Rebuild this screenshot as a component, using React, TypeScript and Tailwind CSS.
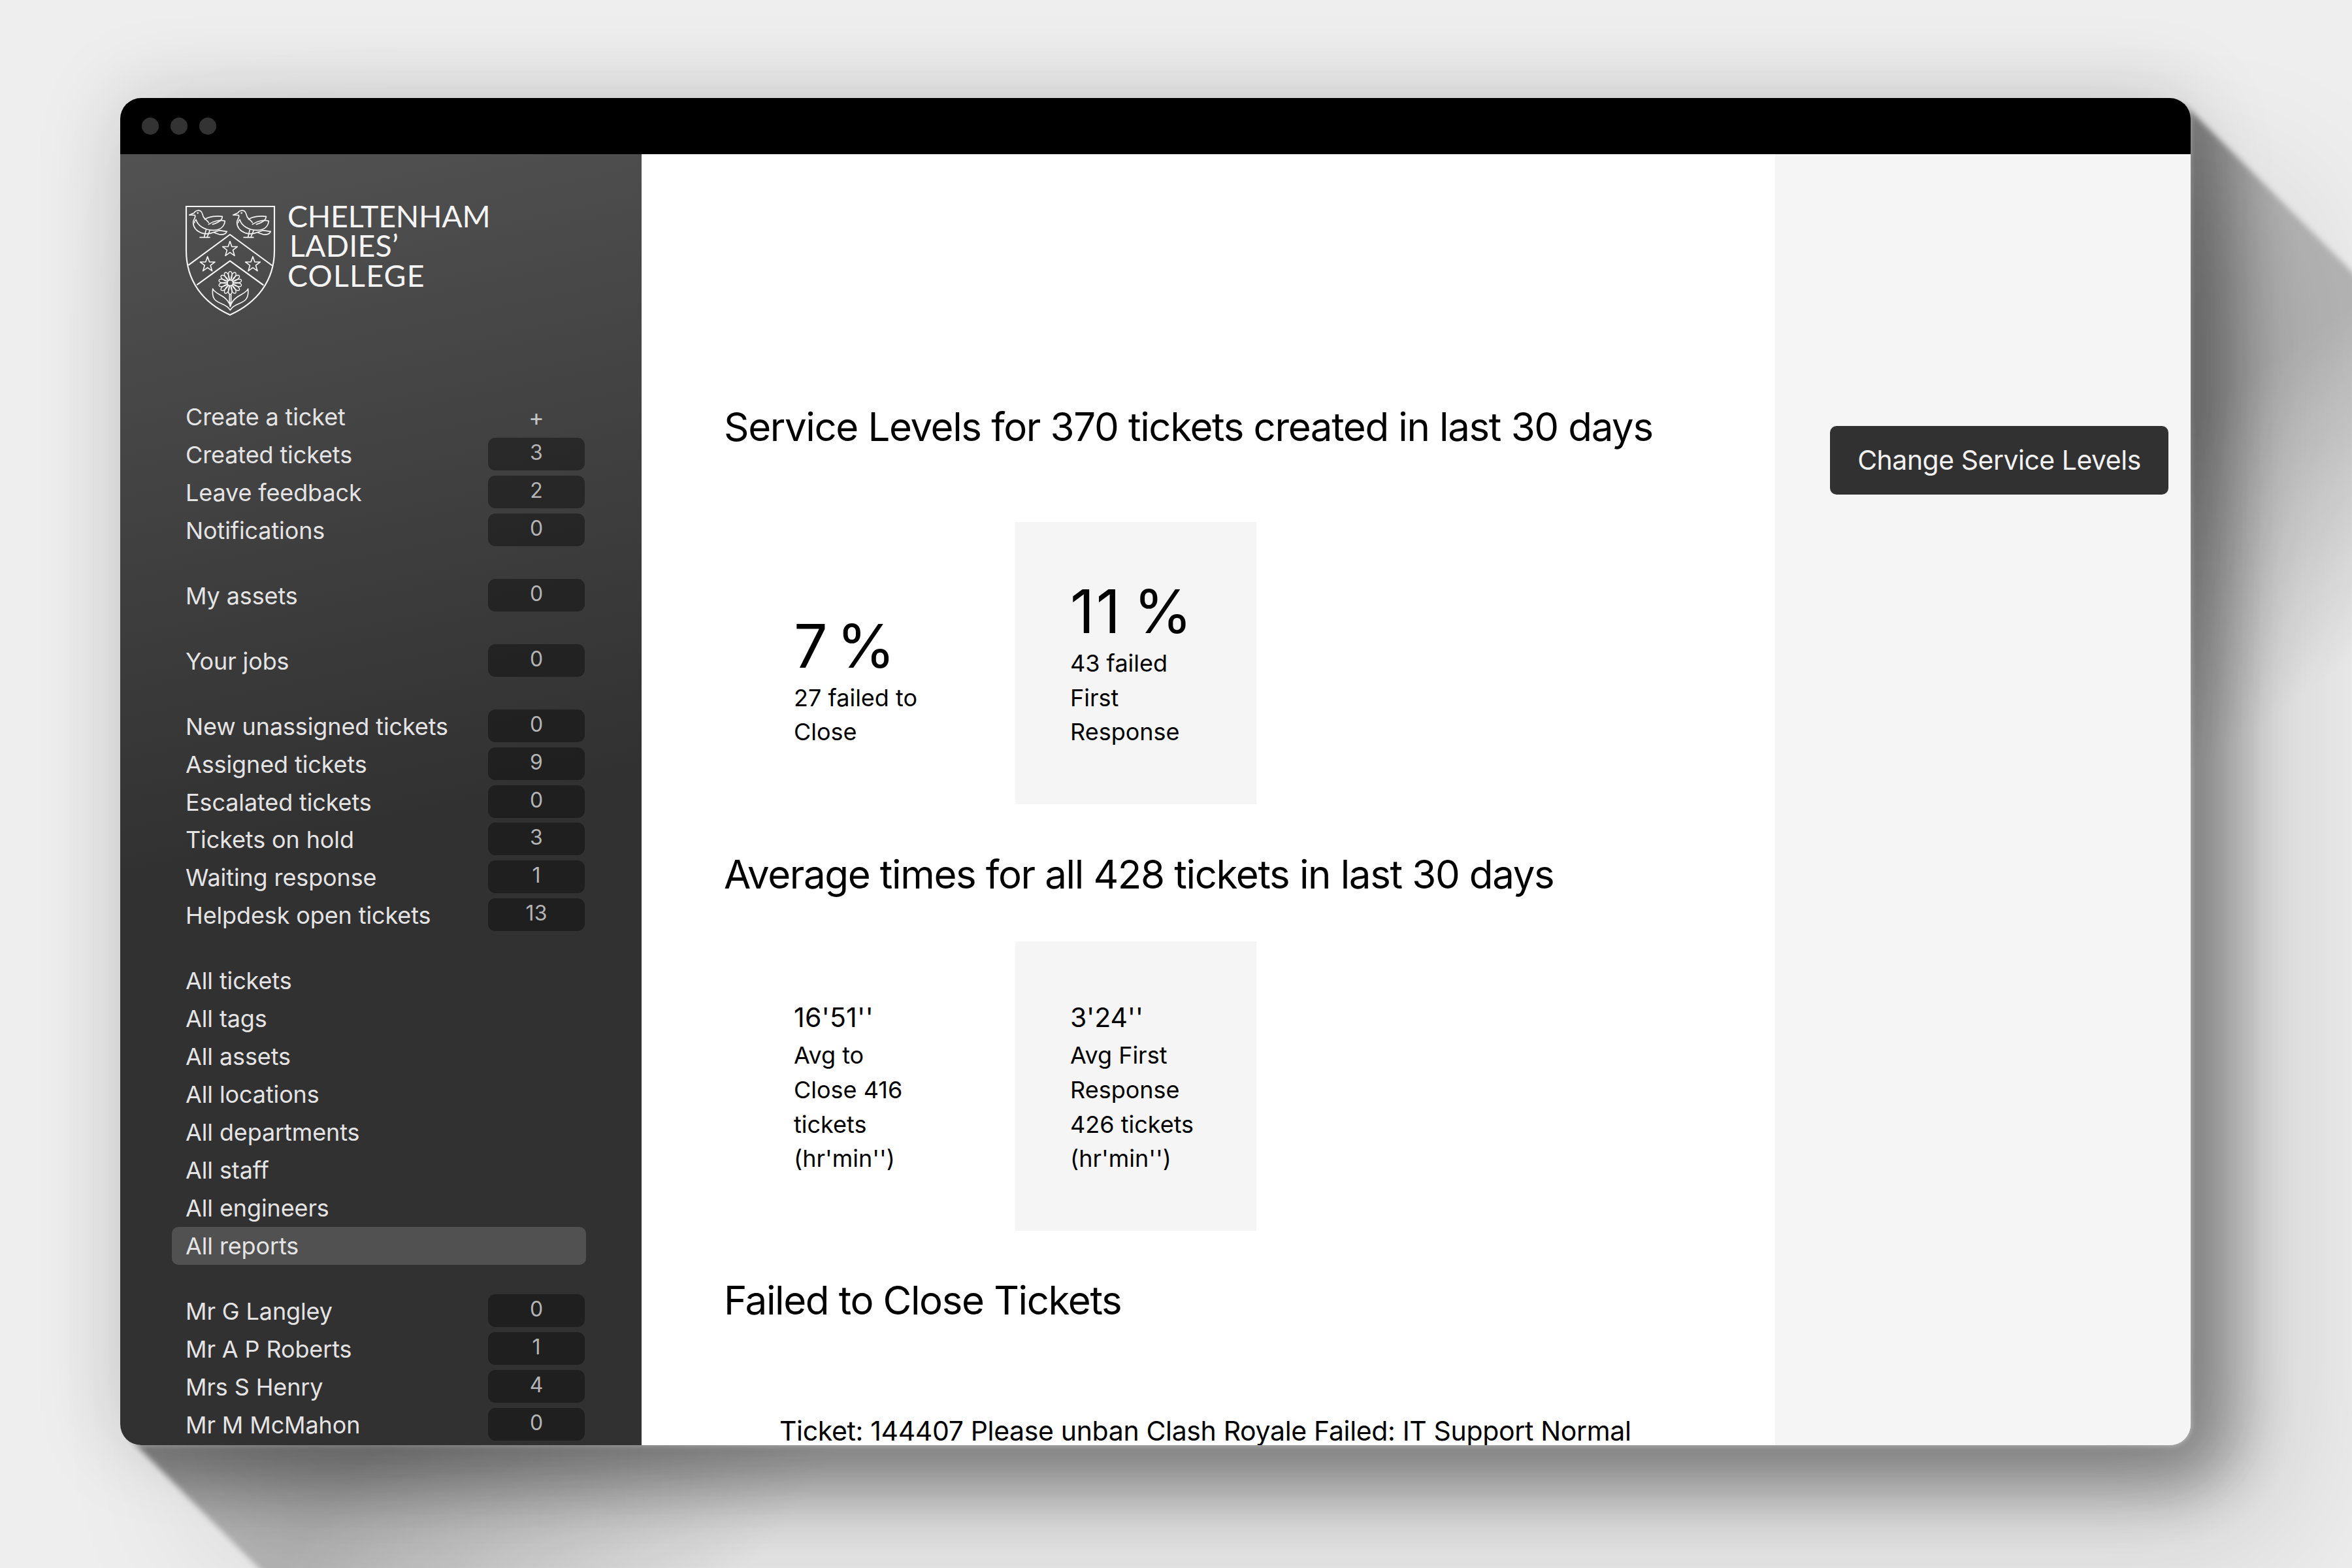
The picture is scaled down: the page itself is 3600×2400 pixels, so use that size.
type Item = { label: string; count?: string; active?: boolean };

const groups: Item[][] = [
  [
    { label: "Create a ticket", count: "+" },
    { label: "Created tickets", count: "3" },
    { label: "Leave feedback", count: "2" },
    { label: "Notifications", count: "0" },
  ],
  [{ label: "My assets", count: "0" }],
  [{ label: "Your jobs", count: "0" }],
  [
    { label: "New unassigned tickets", count: "0" },
    { label: "Assigned tickets", count: "9" },
    { label: "Escalated tickets", count: "0" },
    { label: "Tickets on hold", count: "3" },
    { label: "Waiting response", count: "1" },
    { label: "Helpdesk open tickets", count: "13" },
  ],
  [
    { label: "All tickets" },
    { label: "All tags" },
    { label: "All assets" },
    { label: "All locations" },
    { label: "All departments" },
    { label: "All staff" },
    { label: "All engineers" },
    { label: "All reports", active: true },
  ],
  [
    { label: "Mr G Langley", count: "0" },
    { label: "Mr A P Roberts", count: "1" },
    { label: "Mrs S Henry", count: "4" },
    { label: "Mr M McMahon", count: "0" },
  ],
];

function Bird() {
  return (
    <g>
      <path d="M90 117 L112 107 C116 97 131 94 141 99 C151 105 149 116 154 126 C160 136 172 142 178 152" />
      <path d="M90 117 L115 118 C121 130 108 134 107 150 C107 174 120 190 146 200 C168 207 188 203 204 196 L226 188 L262 193 C258 202 246 208 229 207 L203 198" />
      <path d="M160 137 C180 124 214 120 241 124 C241 140 226 152 196 160" />
      <path d="M178 160 C200 144 232 138 253 145 C250 170 232 186 202 187 C162 188 128 168 120 138 C116 142 113 146 113 152" />
      <path d="M166 186 L158 218 M183 190 L172 216 M138 220 H183" />
      <circle cx="128" cy="108" r="1.5" />
    </g>
  );
}

const STAR =
  "M0 -36 L8.5 -11.5 L34 -11 L13.5 4.5 L21 30 L0 15 L-21 30 L-13.5 4.5 L-34 -11 L-8.5 -11.5 Z";
const PETALS = Array.from({ length: 14 }, (_, i) => (i * 360) / 14);

function Crest() {
  return (
    <svg
      viewBox="0 0 540 630"
      className="h-[210px] w-[180px] shrink-0"
      fill="none"
      stroke="#f4f4f4"
      strokeWidth="5"
      strokeLinejoin="round"
      strokeLinecap="round"
    >
      <path
        strokeWidth="6.5"
        strokeLinejoin="miter"
        d="M75 78 H480 V280 C480 420 400 520 276 576 C152 520 75 420 75 280 Z"
      />
      <path strokeWidth="6.5" d="M87 346 L276 207 L468 348 M126 437 L276 328 L428 438" />
      <Bird />
      <g transform="translate(201 0)">
        <Bird />
      </g>
      <path transform="translate(276 274)" d={STAR} />
      <path transform="translate(173 344)" d={STAR} />
      <path transform="translate(381 344)" d={STAR} />
      <circle cx="277" cy="429" r="13" />
      {PETALS.map((a) => (
        <path
          key={a}
          strokeWidth="4.2"
          transform={`rotate(${a} 277 429)`}
          d="M273 415 C266 396 267 377 277 376 C287 377 288 396 281 415"
        />
      ))}
      <path d="M274 484 V522 M281 484 V522 M277 520 V538" />
      <path d="M197 456 C192 500 206 512 238 525 C258 533 270 542 277 554 C284 542 296 533 316 525 C348 512 363 500 359 456 C350 474 330 480 312 492 C294 504 282 520 278 536 C273 520 262 504 244 492 C226 480 206 474 197 456 Z" />
    </svg>
  );
}

function NavRow({ item }: { item: Item }) {
  return (
    <div
      className={
        "flex h-[57.95px] items-start justify-between rounded-[10px] pr-[2px] pl-[21px] " +
        (item.active ? "bg-[#515151]" : "")
      }
    >
      <span className="text-[36px] leading-[58px] tracking-[-0.12px] whitespace-nowrap text-[#e4e4e4]">
        {item.label}
      </span>
      {item.count === "+" && (
        <span className="w-[148px] text-center text-[36px] leading-[60px] text-[#c4c4c4]">+</span>
      )}
      {item.count !== undefined && item.count !== "+" && (
        <span className="mt-[3px] h-[50px] w-[148px] rounded-[11px] bg-black/37 text-center text-[32px] leading-[46px] text-[#b4b4b4]">
          {item.count}
        </span>
      )}
    </div>
  );
}

type StatProps = { value: string; valueClass: string; lines: string[]; shaded?: boolean };

function Stat({ value, valueClass, lines, shaded }: StatProps) {
  return (
    <div className={"w-[369px] p-[84px] pr-0 " + (shaded ? "bg-[#f5f5f5]" : "")}>
      <div className={"whitespace-nowrap " + valueClass}>{value}</div>
      {lines.map((l) => (
        <div key={l} className="text-[36px] leading-[52.7px] whitespace-nowrap">
          {l}
        </div>
      ))}
    </div>
  );
}

const heading = "text-[60px] leading-[72px] tracking-[-1.37px] whitespace-nowrap";

export default function App() {
  return (
    <div className="relative h-[2400px] w-[3600px] overflow-hidden bg-[#eeeeee] px-[184px] pt-[150px] font-['Inter',sans-serif] text-black">
      <div className="absolute inset-0 blur-[4px]">
        <div className="absolute inset-0 [clip-path:polygon(3336px_152px,3620px_436px,3620px_2420px,416px_2420px,196px_2200px)]">
          <div className="absolute top-[150px] left-[184px] h-[2062px] w-[3169px] rounded-[32px] shadow-[0_0_90px_72px_rgba(0,0,0,0.31)]" />
          <div className="absolute top-[130px] left-[3340px] h-[1100px] w-[280px] bg-[linear-gradient(145deg,rgba(0,0,0,0.23)_40%,rgba(0,0,0,0)_82%)]" />
          <div className="absolute top-[2200px] left-[190px] h-[220px] w-[1120px] bg-[linear-gradient(125deg,rgba(0,0,0,0.23)_30%,rgba(0,0,0,0)_87%)]" />
        </div>
      </div>
      <div className="relative flex h-[2062px] w-[3169px] flex-col overflow-hidden rounded-[32px] bg-white shadow-[0_0_130px_0_rgba(0,0,0,0.18),150px_150px_250px_0_rgba(0,0,0,0.14)]">
        <div className="flex h-[86px] shrink-0 items-center gap-[18px] bg-black pl-[33px]">
          <span className="size-[26px] rounded-full bg-[#333333]" />
          <span className="size-[26px] rounded-full bg-[#333333]" />
          <span className="size-[26px] rounded-full bg-[#333333]" />
        </div>
        <div className="flex min-h-0 flex-1">
          <aside className="w-[798px] shrink-0 overflow-hidden bg-[linear-gradient(168deg,#525252_0%,#313131_52%)]">
            <div className="flex pt-[54px] pl-[76px]">
              <Crest />
              <div className="pt-[18px] font-['Lato',sans-serif] text-[46.5px] leading-[45.3px] text-[#f4f4f4]">
                <div className="tracking-[-0.25px]">CHELTENHAM</div>
                <div className="pl-[3px] tracking-[0.2px]">LADIES’</div>
                <div className="tracking-[1.2px]">COLLEGE</div>
              </div>
            </div>
            <nav className="mt-[109px] ml-[79px] flex w-[634px] flex-col gap-[42px]">
              {groups.map((g, i) => (
                <div key={i}>
                  {g.map((it) => (
                    <NavRow key={it.label} item={it} />
                  ))}
                </div>
              ))}
            </nav>
          </aside>
          <main className="w-[1735px] shrink-0 overflow-hidden pt-[381px] pl-[126px]">
            <h1 className={heading}>Service Levels for 370 tickets created in last 30 days</h1>
            <div className="mt-[110px] flex items-end gap-[54px] pl-[23px]">
              <Stat
                value="7 %"
                valueClass="text-[91.5px] leading-[106px] [word-spacing:-12px]"
                lines={["27 failed to", "Close"]}
              />
              <Stat
                shaded
                value="11 %"
                valueClass="text-[91.5px] leading-[106px] tracking-[2.6px] [word-spacing:-11px]"
                lines={["43 failed", "First", "Response"]}
              />
            </div>
            <h2 className={"mt-[71px] " + heading}>Average times for all 428 tickets in last 30 days</h2>
            <div className="mt-[67px] flex items-end gap-[54px] pl-[23px]">
              <Stat
                value="16'51''"
                valueClass="text-[41px] leading-[64px] tracking-[0.2px]"
                lines={["Avg to", "Close 416", "tickets", "(hr'min'')"]}
              />
              <Stat
                shaded
                value="3'24''"
                valueClass="text-[41px] leading-[64px] tracking-[-0.2px]"
                lines={["Avg First", "Response", "426 tickets", "(hr'min'')"]}
              />
            </div>
            <h2 className={"mt-[70px] " + heading}>Failed to Close Tickets</h2>
            <p className="mt-[139px] pl-[85px] text-[41px] leading-[50px] tracking-[-0.35px] whitespace-nowrap">
              Ticket: 144407 Please unban Clash Royale Failed: IT Support Normal
            </p>
          </main>
          <aside className="flex-1 bg-[#f5f5f5] pt-[416px] pl-[84px]">
            <button className="h-[105px] w-[518px] rounded-[10px] bg-[#313131] text-[41px] leading-[105px] tracking-[-0.5px] whitespace-nowrap text-[#f2f2f2]">
              Change Service Levels
            </button>
          </aside>
        </div>
      </div>
    </div>
  );
}
